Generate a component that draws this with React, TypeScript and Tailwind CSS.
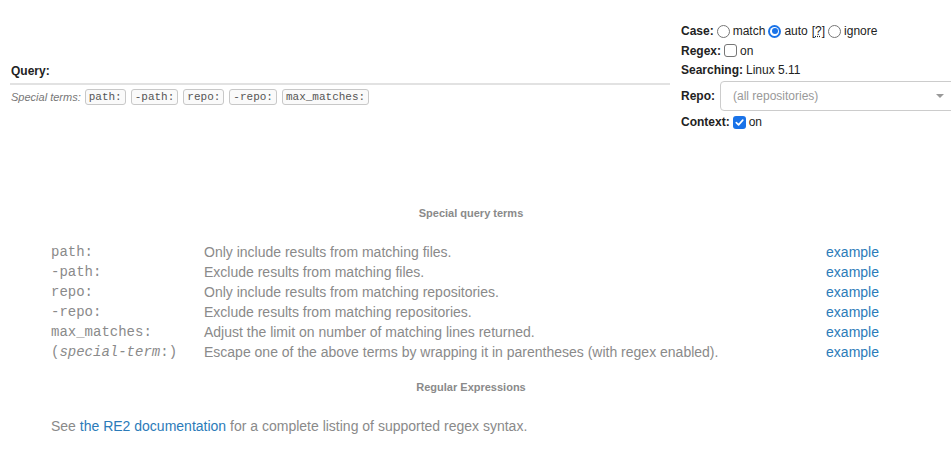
import type { ReactNode } from 'react';

const terms = [
  { term: 'path:', desc: 'Only include results from matching files.' },
  { term: '-path:', desc: 'Exclude results from matching files.' },
  { term: 'repo:', desc: 'Only include results from matching repositories.' },
  { term: '-repo:', desc: 'Exclude results from matching repositories.' },
  { term: 'max_matches:', desc: 'Adjust the limit on number of matching lines returned.' },
];

const badges = ['path:', '-path:', 'repo:', '-repo:', 'max_matches:'];

function Radio({ checked }: { checked?: boolean }) {
  if (checked) {
    return (
      <span className="inline-flex items-center justify-center w-[13px] h-[13px] rounded-full bg-[#1a73e8] mx-[3px]">
        <span className="w-[9px] h-[9px] rounded-full bg-white flex items-center justify-center">
          <span className="w-[6px] h-[6px] rounded-full bg-[#1a73e8]" />
        </span>
      </span>
    );
  }
  return <span className="inline-block w-[13px] h-[13px] rounded-full border border-[#767676] bg-white mx-[3px]" />;
}

function Checkbox({ checked }: { checked?: boolean }) {
  if (checked) {
    return (
      <span className="inline-flex items-center justify-center w-[13px] h-[13px] rounded-[3px] bg-[#1a73e8] mx-[3px]">
        <svg viewBox="0 0 12 12" className="w-[11px] h-[11px]">
          <path d="M2.5 6.2 L5 8.6 L9.6 3.4" fill="none" stroke="white" strokeWidth="1.8" strokeLinecap="round" strokeLinejoin="round" />
        </svg>
      </span>
    );
  }
  return <span className="inline-block w-[13px] h-[13px] rounded-[3px] border border-[#767676] bg-white mx-[3px]" />;
}

function Row({ children, className = '' }: { children: ReactNode; className?: string }) {
  return <div className={`flex items-center whitespace-nowrap ${className}`}>{children}</div>;
}

export default function App() {
  return (
    <div className="w-[951px] h-[453px] overflow-hidden bg-white font-['Liberation_Sans',Arial,sans-serif] text-[#222]">
      {/* Top: query + options */}
      <div className="flex h-[140px]">
        <div className="w-[670px] pl-[10px] pt-[63px] shrink-0">
          <div className="text-[12px] leading-[16px] font-bold pl-[1px]">Query:</div>
          <div className="mt-[4px] h-[2px] bg-[#e2e2e2]" />
          <div className="mt-[4px] flex items-center gap-[5px] pl-[1px]">
            <span className="text-[11px] italic text-[#777] mr-[-1px]">Special terms:</span>
            {badges.map((b) => (
              <span
                key={b}
                className="h-[16px] px-[3px] flex items-center border border-[#c8c8c8] rounded-[3px] bg-[#fafafa] font-['Liberation_Mono','Courier_New',monospace] text-[11px] text-[#555]"
              >
                {b}
              </span>
            ))}
          </div>
        </div>

        <div className="flex-1 pl-[11px] pt-[21px] text-[12px] overflow-hidden">
          <Row className="h-[20px]">
            <span className="font-bold">Case:</span>
            <Radio />
            <span>match</span>
            <Radio checked />
            <span>auto</span>
            <span className="ml-[4px]">
              [<span className="underline decoration-dotted">?</span>]
            </span>
            <Radio />
            <span>ignore</span>
          </Row>
          <Row className="h-[19px]">
            <span className="font-bold">Regex:</span>
            <Checkbox />
            <span>on</span>
          </Row>
          <Row className="h-[20px]">
            <span className="font-bold">Searching:</span>
            <span className="ml-[3px]">Linux 5.11</span>
          </Row>
          <Row className="h-[30px] mt-[1px]">
            <span className="font-bold">Repo:</span>
            <div className="ml-[5px] w-[236px] h-[30px] shrink-0 border border-[#cccccc] rounded-[4px] flex items-center justify-between pl-[12px] pr-[11px]">
              <span className="text-[12px] text-[#999]">(all repositories)</span>
              <span className="w-0 h-0 border-l-[4px] border-r-[4px] border-t-[4px] border-l-transparent border-r-transparent border-t-[#999]" />
            </div>
          </Row>
          <Row className="h-[20px] mt-[1px]">
            <span className="font-bold">Context:</span>
            <Checkbox checked />
            <span>on</span>
          </Row>
        </div>
      </div>

      {/* Help */}
      <div className="w-[942px] text-[#8a8a8a]">
        <div className="text-center text-[11px] font-bold leading-[16px] mt-[65px]">Special query terms</div>
        <div className="pl-[51px] pr-[63px] mt-[21px] text-[14px]">
          {terms.map((t) => (
            <div key={t.term} className="flex h-[20px] items-center">
              <span className="w-[153px] font-['Liberation_Mono','Courier_New',monospace] text-[14px]">{t.term}</span>
              <span className="flex-1">{t.desc}</span>
              <a className="text-[#2b7bb9]">example</a>
            </div>
          ))}
          <div className="flex h-[20px] items-center">
            <span className="w-[153px] font-['Liberation_Mono','Courier_New',monospace] text-[14px]">
              (<i>special-term</i>:)
            </span>
            <span className="flex-1">Escape one of the above terms by wrapping it in parentheses (with regex enabled).</span>
            <a className="text-[#2b7bb9]">example</a>
          </div>
        </div>
        <div className="text-center text-[11px] font-bold leading-[16px] mt-[17px]">Regular Expressions</div>
        <div className="pl-[51px] mt-[21px] text-[14px] leading-[20px]">
          See <a className="text-[#2b7bb9]">the RE2 documentation</a> for a complete listing of supported regex syntax.
        </div>
      </div>
    </div>
  );
}
